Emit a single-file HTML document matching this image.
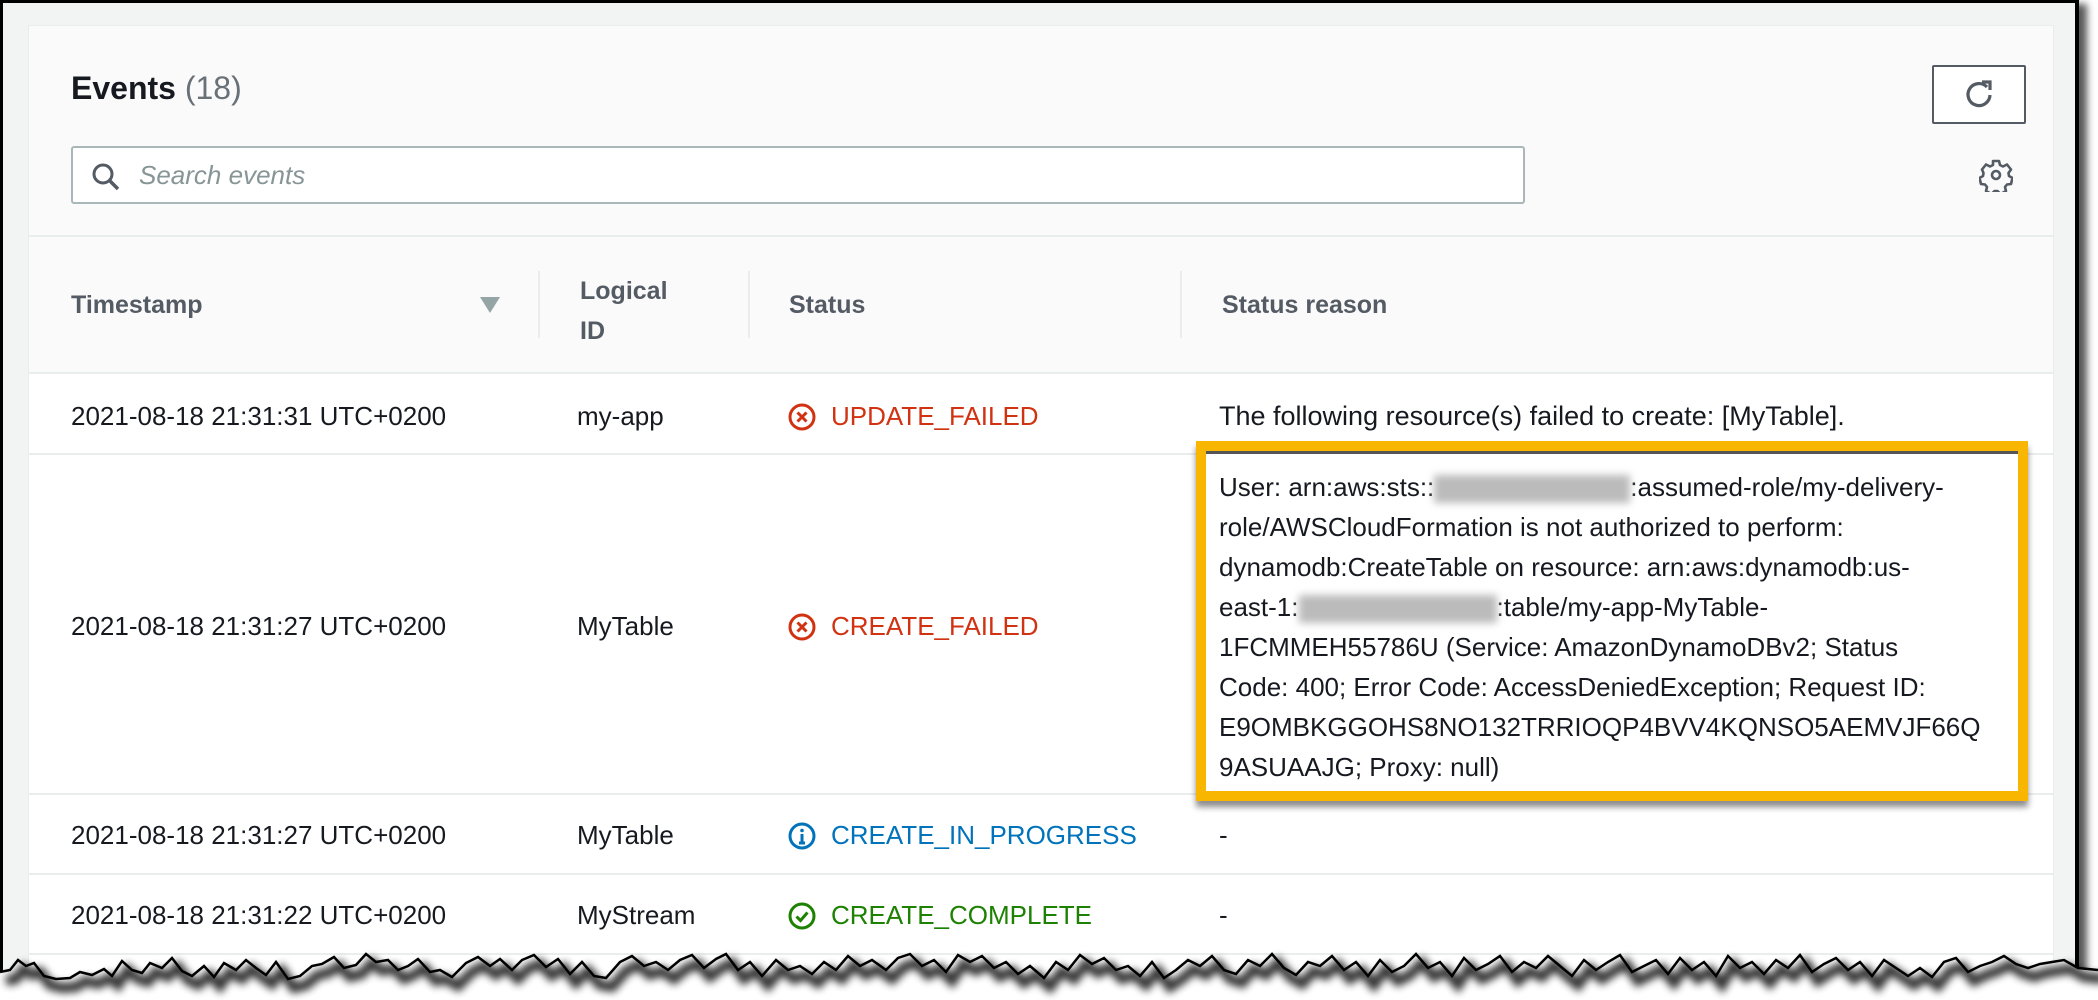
<!DOCTYPE html>
<html><head><meta charset="utf-8"><style>
*{margin:0;padding:0;box-sizing:border-box}
body{width:2098px;height:1000px;background:#fff;position:relative;overflow:hidden;font-family:"Liberation Sans",sans-serif;color:#16191f}
.frame{position:absolute;left:0;top:0;width:2079px;height:990px;background:#f2f3f3;border-top:3px solid #000;border-left:3px solid #000;border-right:4px solid #000;box-shadow:8px 4px 7px rgba(0,0,0,.65)}
.card{position:absolute;left:28px;top:25px;width:2026px;height:960px;background:#fff;border:1px solid #eaeded}
.hdr{position:absolute;left:0;top:0;width:100%;height:348px;background:#fafafa;border-bottom:2px solid #eaeded}
.hline{position:absolute;left:0;top:209px;width:100%;height:2px;background:#eaeded}
.abs{position:absolute;white-space:nowrap}
.th{font-weight:bold;font-size:25px;color:#545b64}
.td{font-size:26px;color:#16191f}
.rowline{position:absolute;left:0;width:100%;height:2px;background:#eaeded}
.vdiv{position:absolute;top:245px;width:2px;height:67px;background:#eaeded}
.st{font-size:26px}
.blur{display:inline-block;background:#bbb;filter:blur(4px);vertical-align:middle}
</style></head><body>
<div class="frame"></div>
<div class="card">
 <div class="hdr"></div>
 <div class="hline"></div>
 <div class="abs" style="left:42px;top:44px;font-size:32px;font-weight:bold;">Events <span style="font-weight:normal;color:#687078">(18)</span></div>
 <div class="abs" style="left:42px;top:120px;width:1454px;height:58px;border:2px solid #aab7b8;border-radius:3px;background:#fff"></div>
 <svg class="abs" style="left:60px;top:134px" width="34" height="34" viewBox="0 0 34 34"><circle cx="14" cy="14" r="9" fill="none" stroke="#545b64" stroke-width="3"/><path d="M21 21l8 8" stroke="#545b64" stroke-width="3.5"/></svg>
 <div class="abs" style="left:110px;top:134px;font-size:26px;font-style:italic;color:#879596">Search events</div>
 <div class="abs" style="left:1903px;top:39px;width:94px;height:59px;border:2px solid #545b64;border-radius:2px;background:#fff"></div>
 <svg class="abs" style="left:1934px;top:52px" width="34" height="34" viewBox="0 0 34 34"><path d="M24 9A11 11 0 1 0 27 17" fill="none" stroke="#545b64" stroke-width="3.2"/><path d="M19 4h8v8" fill="none" stroke="#545b64" stroke-width="3.2"/></svg>
 <svg class="abs" style="left:1950px;top:132px" width="34" height="34" viewBox="0 0 34 34"><path d="M14 3h6l1 4 3 1.5 4-2 4 5-2.5 3.5.5 3 3.5 2-1.5 6-4 .5-2 2.5 1 4-5.5 3-3-3h-3l-3 3-5.5-3 1-4-2-2.5-4-.5-1.5-6 3.5-2 .5-3L3 11.5l4-5 4 2L14 7z" fill="none" stroke="#545b64" stroke-width="2.6" stroke-linejoin="round"/><circle cx="17" cy="17" r="4" fill="none" stroke="#545b64" stroke-width="2.6"/></svg>

 <div class="abs th" style="left:42px;top:265px">Timestamp</div>
 <svg class="abs" style="left:451px;top:271px" width="20" height="16"><path d="M0 0h20L10 16z" fill="#95a5a6"/></svg>
 <div class="vdiv" style="left:509px"></div>
 <div class="abs th" style="left:551px;top:245px;line-height:40px">Logical<br>ID</div>
 <div class="vdiv" style="left:719px"></div>
 <div class="abs th" style="left:760px;top:265px">Status</div>
 <div class="vdiv" style="left:1151px"></div>
 <div class="abs th" style="left:1193px;top:265px">Status reason</div>

 <div class="abs td" style="left:42px;top:375px">2021-08-18 21:31:31 UTC+0200</div>
 <div class="abs td" style="left:548px;top:375px">my-app</div>
 <svg class="abs" style="left:758px;top:376px" width="30" height="30" viewBox="0 0 30 30"><circle cx="15" cy="15" r="12" fill="none" stroke="#d13212" stroke-width="3"/><path d="M10.5 10.5l9 9M19.5 10.5l-9 9" stroke="#d13212" stroke-width="3"/></svg>
 <div class="abs st" style="left:802px;top:375px;color:#d13212">UPDATE_FAILED</div>
 <div class="abs td" style="left:1190px;top:375px;font-size:27px">The following resource(s) failed to create: [MyTable].</div>
 <div class="rowline" style="top:427px"></div>

 <div class="abs td" style="left:42px;top:585px">2021-08-18 21:31:27 UTC+0200</div>
 <div class="abs td" style="left:548px;top:585px">MyTable</div>
 <svg class="abs" style="left:758px;top:586px" width="30" height="30" viewBox="0 0 30 30"><circle cx="15" cy="15" r="12" fill="none" stroke="#d13212" stroke-width="3"/><path d="M10.5 10.5l9 9M19.5 10.5l-9 9" stroke="#d13212" stroke-width="3"/></svg>
 <div class="abs st" style="left:802px;top:585px;color:#d13212">CREATE_FAILED</div>
 <div class="rowline" style="top:767px"></div>

 <div class="abs td" style="left:42px;top:794px">2021-08-18 21:31:27 UTC+0200</div>
 <div class="abs td" style="left:548px;top:794px">MyTable</div>
 <svg class="abs" style="left:758px;top:795px" width="30" height="30" viewBox="0 0 30 30"><circle cx="15" cy="15" r="12" fill="none" stroke="#0073bb" stroke-width="3"/><circle cx="15" cy="9.5" r="1.8" fill="#0073bb"/><path d="M15 13v9M12 22h6" stroke="#0073bb" stroke-width="3"/></svg>
 <div class="abs st" style="left:802px;top:794px;color:#0073bb">CREATE_IN_PROGRESS</div>
 <div class="abs td" style="left:1190px;top:794px">-</div>
 <div class="rowline" style="top:847px"></div>

 <div class="abs td" style="left:42px;top:874px">2021-08-18 21:31:22 UTC+0200</div>
 <div class="abs td" style="left:548px;top:874px">MyStream</div>
 <svg class="abs" style="left:758px;top:875px" width="30" height="30" viewBox="0 0 30 30"><circle cx="15" cy="15" r="12" fill="none" stroke="#1d8102" stroke-width="3"/><path d="M9.5 15.5l4 4 7-8" fill="none" stroke="#1d8102" stroke-width="3"/></svg>
 <div class="abs st" style="left:802px;top:874px;color:#1d8102">CREATE_COMPLETE</div>
 <div class="abs td" style="left:1190px;top:874px">-</div>
 <div class="rowline" style="top:927px"></div>
</div>

<div class="abs" style="left:1196px;top:441px;width:832px;height:360px;border:10px solid #f9b600;background:#fff;box-shadow:inset 0 3px 0 #555, 0 6px 6px rgba(0,0,0,.45)"></div>
<div class="abs td" style="left:1219px;top:467px;line-height:40px">User: arn:aws:sts::<span class="blur" style="width:196px;height:28px"></span>:assumed-role/my-delivery-<br>role/AWSCloudFormation is not authorized to perform:<br>dynamodb:CreateTable on resource: arn:aws:dynamodb:us-<br>east-1:<span class="blur" style="width:198px;height:28px"></span>:table/my-app-MyTable-<br>1FCMMEH55786U (Service: AmazonDynamoDBv2; Status<br>Code: 400; Error Code: AccessDeniedException; Request ID:<br>E9OMBKGGOHS8NO132TRRIOQP4BVV4KQNSO5AEMVJF66Q<br>9ASUAAJG; Proxy: null)</div>

<svg class="abs" style="left:0;top:940px" width="2098" height="60" viewBox="0 940 2098 60">
<defs><filter id="sh" x="-5%" y="-100%" width="110%" height="300%"><feGaussianBlur stdDeviation="4"/></filter>
<path id="j" d="M0 972 L10 970 18 960 26 966 34 963 44 976 56 979 70 978 80 972 92 975 104 969 112 976 122 961 132 970 142 973 150 963 162 968 172 958 182 971 192 976 204 966 214 977 224 963 236 970 246 960 256 968 266 975 276 962 288 979 300 976 312 966 322 964 334 957 344 968 356 965 366 954 376 962 388 960 398 970 408 966 418 959 430 972 440 970 452 977 466 963 478 957 490 966 500 959 512 970 522 960 534 955 546 967 558 959 570 974 582 962 594 976 606 978 620 962 632 956 644 966 656 962 668 970 680 960 692 955 704 968 716 959 726 954 738 970 750 962 762 976 776 960 788 970 800 966 812 974 824 962 836 970 848 956 860 966 872 960 886 970 898 958 910 954 922 966 934 960 946 972 958 955 970 962 982 956 994 968 1006 962 1018 974 1030 966 1044 978 1056 962 1068 970 1080 955 1092 964 1104 958 1116 970 1128 966 1140 976 1152 962 1164 978 1176 970 1188 960 1200 966 1212 956 1224 970 1236 974 1248 960 1260 966 1272 954 1284 968 1296 975 1308 962 1320 966 1332 956 1344 970 1356 962 1368 976 1380 960 1392 972 1404 966 1416 954 1428 968 1440 962 1452 976 1464 958 1476 970 1488 964 1500 956 1512 972 1524 962 1536 968 1548 956 1560 966 1572 976 1584 960 1596 970 1608 962 1620 955 1632 972 1644 966 1656 960 1668 974 1680 958 1692 970 1704 962 1716 976 1728 956 1740 968 1752 962 1764 974 1776 960 1788 968 1800 955 1812 972 1824 964 1836 958 1848 970 1860 962 1872 976 1884 960 1896 968 1908 976 1920 968 1932 977 1944 962 1956 958 1968 972 1980 966 1992 962 2004 956 2016 964 2028 968 2040 964 2052 962 2064 960 2078 968 2098 970"/></defs>
<path d="M0 972 L0 1000 2098 1000 2098 970Z" fill="#fff"/>
<use href="#j" fill="#fff" stroke="none"/>
<path d="M0 972 L10 970 18 960 26 966 34 963 44 976 56 979 70 978 80 972 92 975 104 969 112 976 122 961 132 970 142 973 150 963 162 968 172 958 182 971 192 976 204 966 214 977 224 963 236 970 246 960 256 968 266 975 276 962 288 979 300 976 312 966 322 964 334 957 344 968 356 965 366 954 376 962 388 960 398 970 408 966 418 959 430 972 440 970 452 977 466 963 478 957 490 966 500 959 512 970 522 960 534 955 546 967 558 959 570 974 582 962 594 976 606 978 620 962 632 956 644 966 656 962 668 970 680 960 692 955 704 968 716 959 726 954 738 970 750 962 762 976 776 960 788 970 800 966 812 974 824 962 836 970 848 956 860 966 872 960 886 970 898 958 910 954 922 966 934 960 946 972 958 955 970 962 982 956 994 968 1006 962 1018 974 1030 966 1044 978 1056 962 1068 970 1080 955 1092 964 1104 958 1116 970 1128 966 1140 976 1152 962 1164 978 1176 970 1188 960 1200 966 1212 956 1224 970 1236 974 1248 960 1260 966 1272 954 1284 968 1296 975 1308 962 1320 966 1332 956 1344 970 1356 962 1368 976 1380 960 1392 972 1404 966 1416 954 1428 968 1440 962 1452 976 1464 958 1476 970 1488 964 1500 956 1512 972 1524 962 1536 968 1548 956 1560 966 1572 976 1584 960 1596 970 1608 962 1620 955 1632 972 1644 966 1656 960 1668 974 1680 958 1692 970 1704 962 1716 976 1728 956 1740 968 1752 962 1764 974 1776 960 1788 968 1800 955 1812 972 1824 964 1836 958 1848 970 1860 962 1872 976 1884 960 1896 968 1908 976 1920 968 1932 977 1944 962 1956 958 1968 972 1980 966 1992 962 2004 956 2016 964 2028 968 2040 964 2052 962 2064 960 2078 968 2098 970 L2098 1000 0 1000Z" fill="#fff"/>
<use href="#j" fill="none" stroke="#000" stroke-width="10" opacity=".8" transform="translate(6,9)" filter="url(#sh)"/>
<use href="#j" fill="none" stroke="#000" stroke-width="2.5"/>
</svg>
</body></html>
